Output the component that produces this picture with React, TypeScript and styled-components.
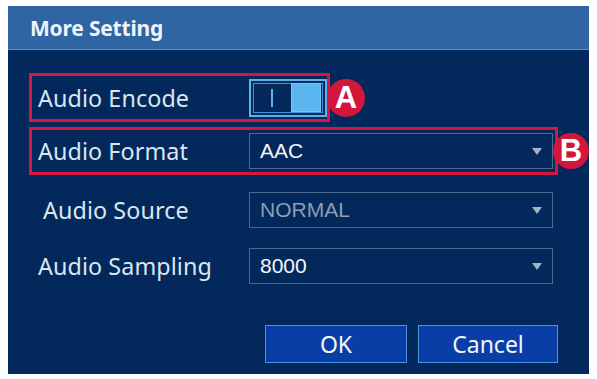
import styled, { createGlobalStyle } from 'styled-components'

const GlobalStyle = createGlobalStyle`
  body {
    margin: 0;
    background: #ffffff;
    font-family: "Noto Sans", "Open Sans", sans-serif;
  }
`

const Page = styled.div`
  padding: 6px 0 0 8px;
`

const Dialog = styled.div`
  width: 581px;
  height: 368px;
  background: #03285b;
  display: flex;
  flex-direction: column;
`

const TitleBar = styled.div`
  height: 43px;
  background: #2f65a3;
  border-bottom: 1px solid #5f8fc6;
  display: flex;
  align-items: center;
  padding-left: 22px;
  color: #eef4fa;
  font-size: 21px;
  font-weight: 700;
  letter-spacing: -0.2px;
`

const Form = styled.div`
  display: flex;
  flex-direction: column;
  align-items: flex-start;
  padding: 23px 0 0 21px;
`

const Row = styled.div<{ $highlight?: boolean; $width: number; $height?: number; $mt?: number }>`
  position: relative;
  box-sizing: border-box;
  display: flex;
  align-items: center;
  width: ${p => p.$width}px;
  height: ${p => p.$height ?? 48}px;
  margin-top: ${p => p.$mt ?? 0}px;
  border: 3px solid ${p => (p.$highlight ? '#d5173d' : 'transparent')};
  padding-left: 6px;
`

const Label = styled.div<{ $indent?: number }>`
  width: 211px;
  box-sizing: border-box;
  padding-left: ${p => p.$indent ?? 0}px;
  color: #dbe6f0;
  font-size: 23.3px;
  letter-spacing: 0.1px;
  white-space: nowrap;
`

const Toggle = styled.div`
  box-sizing: border-box;
  width: 78px;
  height: 38px;
  border: 2px solid #58b2ee;
  box-shadow: inset 0 0 0 2px #0a2a57, inset 0 0 0 3px #3f92d8;
  display: flex;
  align-items: center;
  padding: 0 4px 0 20px;
`

const ToggleBar = styled.div`
  width: 2px;
  height: 18px;
  background: #5cb4ee;
`

const Knob = styled.div`
  margin-left: auto;
  width: 30px;
  height: 29px;
  box-sizing: border-box;
  background: #5cb6ef;
  border: 1px solid #7cc4f3;
`

const Select = styled.div<{ $dim?: boolean }>`
  box-sizing: border-box;
  width: 304px;
  height: 36px;
  border: 1px solid #4c6b8d;
  display: flex;
  align-items: center;
  justify-content: space-between;
  padding: 0 10px 0 10px;
  font-family: "Liberation Sans", Arial, sans-serif;
  font-size: 21px;
  color: ${p => (p.$dim ? '#8d9db3' : '#f2f6fa')};
`

const Arrow = styled.span`
  width: 0;
  height: 0;
  border-left: 5px solid transparent;
  border-right: 5px solid transparent;
  border-top: 7px solid #a3b2c5;
`

const Badge = styled.div<{ $x: number; $size: number }>`
  position: absolute;
  top: 50%;
  left: calc(100% + ${p => p.$x}px);
  width: ${p => p.$size}px;
  height: ${p => p.$size}px;
  transform: translate(-50%, -50%);
  border-radius: 50%;
  background: #d3163b;
  color: #ffffff;
  font-family: "Liberation Sans", Arial, sans-serif;
  font-weight: 700;
  font-size: 31px;
  display: flex;
  align-items: center;
  justify-content: center;
`

const Buttons = styled.div`
  display: flex;
  justify-content: flex-end;
  gap: 11px;
  margin-top: 35px;
  padding-right: 31px;
`

const Button = styled.button<{ $width: number }>`
  box-sizing: border-box;
  width: ${p => p.$width}px;
  height: 38px;
  background: #0a3ea7;
  border: 1px solid #4a93df;
  color: #f2f6fa;
  font-family: "Noto Sans", "Open Sans", sans-serif;
  font-size: 23px;
  padding: 0;
`

export default function App () {
  return (
    <Page>
      <GlobalStyle />
      <Dialog>
        <TitleBar>More Setting</TitleBar>
        <Form>
          <Row $highlight $width={301} $height={49}>
            <Label>Audio Encode</Label>
            <Toggle>
              <ToggleBar />
              <Knob />
            </Toggle>
            <Badge $x={19} $size={38}>A</Badge>
          </Row>
          <Row $highlight $width={529} $mt={5}>
            <Label>Audio Format</Label>
            <Select>AAC<Arrow /></Select>
            <Badge $x={16} $size={36}>B</Badge>
          </Row>
          <Row $width={529} $mt={11}>
            <Label $indent={5}>Audio Source</Label>
            <Select $dim>NORMAL<Arrow /></Select>
          </Row>
          <Row $width={529} $mt={8}>
            <Label>Audio Sampling</Label>
            <Select>8000<Arrow /></Select>
          </Row>
        </Form>
        <Buttons>
          <Button $width={142}>OK</Button>
          <Button $width={140}>Cancel</Button>
        </Buttons>
      </Dialog>
    </Page>
  )
}
